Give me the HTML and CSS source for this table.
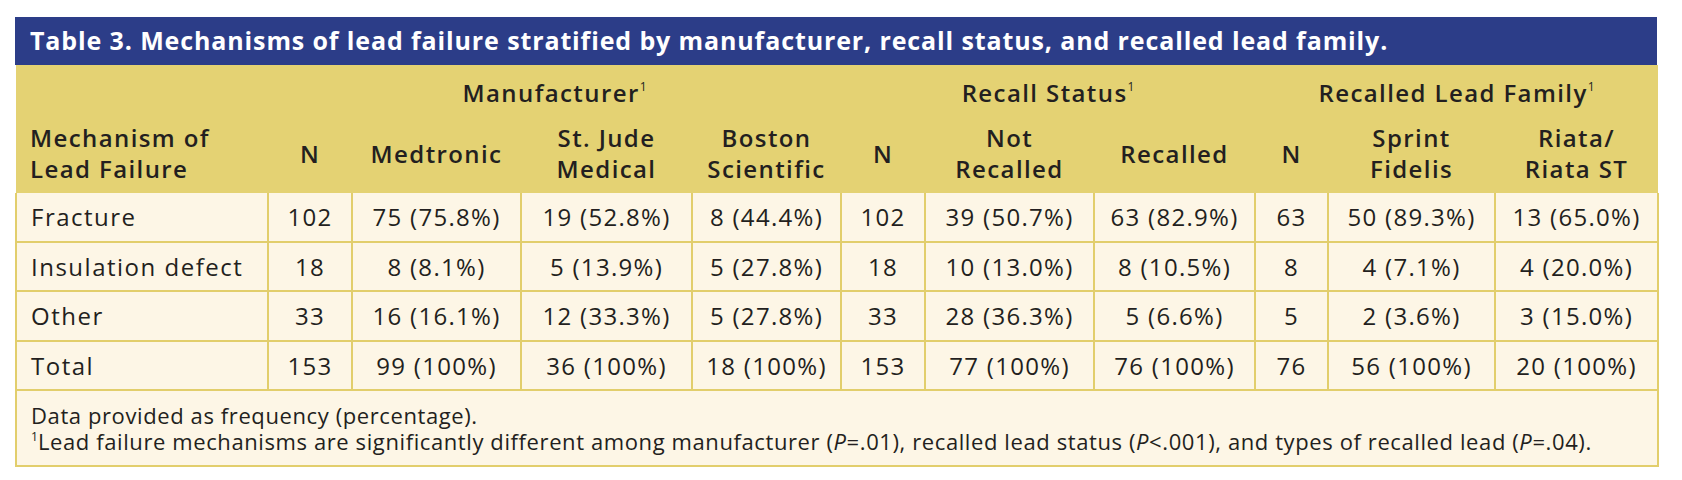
FILE: index.html
```html
<!DOCTYPE html>
<html>
<head>
<meta charset="utf-8">
<link rel="stylesheet" href="styles.css">
</head>
<body>
<div class="wrap">
  <div class="title">Table 3. Mechanisms of lead failure stratified by manufacturer, recall status, and recalled lead family.</div>
  <table class="tbl">
    <colgroup>
      <col style="width:252px"><col style="width:84px"><col style="width:169px"><col style="width:171px">
      <col style="width:149px"><col style="width:84px"><col style="width:169px"><col style="width:161px">
      <col style="width:73px"><col style="width:167px"><col style="width:163px">
    </colgroup>
    <thead>
      <tr class="h1">
        <th></th>
        <th colspan="4">Manufacturer<sup>1</sup></th>
        <th colspan="3">Recall Status<sup>1</sup></th>
        <th colspan="3">Recalled Lead Family<sup>1</sup></th>
      </tr>
      <tr class="h2">
        <th class="left">Mechanism of<br>Lead Failure</th>
        <th>N</th>
        <th>Medtronic</th>
        <th>St. Jude<br>Medical</th>
        <th>Boston<br>Scientific</th>
        <th>N</th>
        <th>Not<br>Recalled</th>
        <th>Recalled</th>
        <th>N</th>
        <th>Sprint<br>Fidelis</th>
        <th>Riata/<br>Riata ST</th>
      </tr>
    </thead>
    <tbody>
      <tr>
        <td class="left">Fracture</td><td>102</td><td>75 (75.8%)</td><td>19 (52.8%)</td><td>8 (44.4%)</td><td>102</td><td>39 (50.7%)</td><td>63 (82.9%)</td><td>63</td><td>50 (89.3%)</td><td>13 (65.0%)</td>
      </tr>
      <tr>
        <td class="left">Insulation defect</td><td>18</td><td>8 (8.1%)</td><td>5 (13.9%)</td><td>5 (27.8%)</td><td>18</td><td>10 (13.0%)</td><td>8 (10.5%)</td><td>8</td><td>4 (7.1%)</td><td>4 (20.0%)</td>
      </tr>
      <tr>
        <td class="left">Other</td><td>33</td><td>16 (16.1%)</td><td>12 (33.3%)</td><td>5 (27.8%)</td><td>33</td><td>28 (36.3%)</td><td>5 (6.6%)</td><td>5</td><td>2 (3.6%)</td><td>3 (15.0%)</td>
      </tr>
      <tr>
        <td class="left">Total</td><td>153</td><td>99 (100%)</td><td>36 (100%)</td><td>18 (100%)</td><td>153</td><td>77 (100%)</td><td>76 (100%)</td><td>76</td><td>56 (100%)</td><td>20 (100%)</td>
      </tr>
      <tr class="foot">
        <td colspan="11"><div class="fline">Data provided as frequency (percentage).</div><div class="fline"><sup>1</sup>Lead failure mechanisms are significantly different among manufacturer (<i>P</i>=.01), recalled lead status (<i>P</i>&lt;.001), and types of recalled lead (<i>P</i>=.04).</div></td>
      </tr>
    </tbody>
  </table>
</div>
</body>
</html>
```
FILE: styles.css
```css
html, body {
  margin: 0;
  padding: 0;
  background: #ffffff;
}
body {
  font-family: "Open Sans", "Noto Sans", "DejaVu Sans", sans-serif;
  color: #231f20;
}
.wrap {
  margin: 17px 0 0 15px;
  width: 1642px;
}
.title {
  background: #2c3d88;
  color: #ffffff;
  height: 48px;
  box-sizing: border-box;
  padding: 0 0 2px 15px;
  display: flex;
  align-items: center;
  font-size: 25px;
  font-weight: 700;
  letter-spacing: 0.88px;
  white-space: nowrap;
}
.tbl {
  width: 1642px;
  border-collapse: collapse;
  table-layout: fixed;
}
.tbl th {
  background: #e4d273;
  font-weight: 600;
  font-size: 24px;
  line-height: 31px;
  letter-spacing: 1.4px;
  text-align: center;
  padding: 0;
  border: none;
}
.tbl th.left, .tbl td.left {
  text-align: left;
  padding-left: 14px;
}
.h1 th {
  height: 48px;
  vertical-align: middle;
  padding-top: 6px;
  box-sizing: border-box;
}
.h2 th {
  height: 80px;
}
.tbl sup {
  font-size: 0.5em;
  vertical-align: 0.9em;
  line-height: 0;
  font-weight: 400;
  letter-spacing: 0;
}
.tbl td {
  background: #fdf6e6;
  border: 2px solid #e2ce6c;
  height: 47.5px;
  padding: 0;
  text-align: center;
  font-size: 24px;
  letter-spacing: 1.3px;
  white-space: nowrap;
}
.tbl td.left {
  letter-spacing: 1.5px;
}
.tbl tbody tr:first-child td {
  border-top: none;
}
.foot td {
  height: 74px;
  text-align: left;
  padding-left: 14px;
  font-size: 22px;
  letter-spacing: 0.6px;
  white-space: normal;
}
.fline {
  line-height: 26px;
  height: 26px;
  white-space: nowrap;
}
.foot sup {
  font-size: 0.55em;
  vertical-align: 0.75em;
}
```
